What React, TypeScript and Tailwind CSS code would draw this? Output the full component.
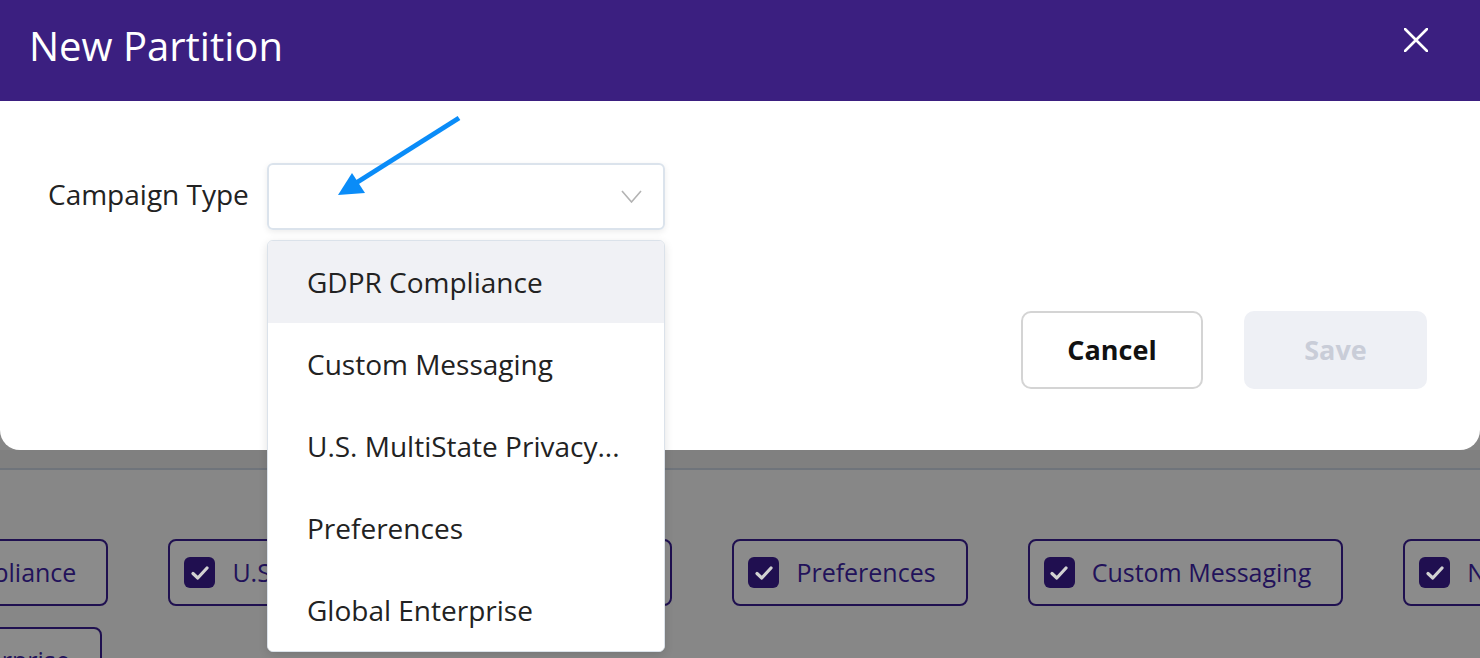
const font = { fontFamily: '"Open Sans", "Noto Sans", sans-serif' };

const options = ['GDPR Compliance', 'Custom Messaging', 'U.S. MultiState Privacy...', 'Preferences', 'Global Enterprise'];

const Chip = ({ label, className = '' }: { label: string; className?: string }) => (
  <div className={`shrink-0 h-[67px] flex items-center gap-[17px] pl-[14px] pr-[30px] rounded-[8px] border-2 border-[#1f1050] bg-[#8b8b8b] ${className}`}>
    <span className="w-[31px] h-[31px] rounded-[6px] bg-[#200f50] flex items-center justify-center">
      <svg width="18" height="14" viewBox="0 0 18 14" fill="none">
        <path d="M2 7.5 L6.8 12 L16 2" stroke="#d2d2d2" strokeWidth="3.2" strokeLinecap="round" strokeLinejoin="round" />
      </svg>
    </span>
    <span className="text-[25px] text-[#22125a] whitespace-nowrap leading-none">{label}</span>
  </div>
);

export default function App() {
  return (
    <div className="relative w-[1480px] h-[658px] overflow-hidden bg-[#878787]" style={font}>
      {/* modal */}
      <div className="bg-white rounded-b-[20px]">
        <div className="h-[101px] bg-[#3b1f80] flex items-start justify-between pl-[29px] pr-[52px]">
          <h1 className="text-[40px] text-white leading-none mt-[26px]">New Partition</h1>
          <svg width="24" height="24" viewBox="0 0 24 24" className="mt-[28px]">
            <path d="M1 1 L23 23 M23 1 L1 23" stroke="white" strokeWidth="2.6" strokeLinecap="round" />
          </svg>
        </div>
        <div className="h-[349px] px-12 pt-[62px] flex flex-col">
          <div className="flex items-center gap-4">
            <span className="w-[203px] text-[28px] text-[#222] leading-none -mt-[5px]">Campaign Type</span>
            <div className="w-[398px] h-[67px] rounded-[6px] border-2 border-[#dbe3ec] shadow-[0_2px_6px_rgba(0,0,0,0.08)] flex items-center justify-end pr-[21px]">
              <svg width="21" height="13" viewBox="0 0 21 13" fill="none">
                <path d="M1 1 L10.5 12 L20 1" stroke="#b3b3b3" strokeWidth="1.6" />
              </svg>
            </div>
          </div>
          <div className="flex justify-end gap-[41px] mt-[81px] pr-[5px]">
            <button className="w-[182px] h-[78px] rounded-[10px] border-2 border-[#d4d4d4] text-[27px] font-bold text-[#111]">Cancel</button>
            <button className="w-[183px] h-[78px] rounded-[10px] bg-[#eef0f5] text-[27px] font-bold text-[#c9cdd8]">Save</button>
          </div>
        </div>
      </div>

      {/* page underneath */}
      <div className="bg-[#808080] h-[18px]" />
      <div className="h-[2px] bg-[#6f747b]" />
      <div className="ml-[-198px] mt-[69px] flex flex-col gap-[21px]">
        <div className="flex gap-[60px]">
          <Chip label="GDPR Compliance" />
          <Chip label="U.S. MultiState Privacy Compliance" className="w-[504px]" />
          <Chip label="Preferences" />
          <Chip label="Custom Messaging" />
          <Chip label="New Campaign" />
        </div>
        <div className="flex gap-[60px] pl-[2px]">
          <Chip label="Global Enterprise" />
        </div>
      </div>

      {/* open dropdown */}
      <div className="absolute left-[267px] top-[240px] w-[398px] bg-white rounded-[6px] border border-[#dbe2ea] shadow-[0_3px_10px_rgba(0,0,0,0.12)] overflow-hidden">
        {options.map((o, i) => (
          <div
            key={o}
            className={`h-[82px] flex items-center pl-[39px] text-[28px] text-[#222] ${i === 0 ? 'bg-[#f0f1f5]' : 'bg-white'}`}
          >
            {o}
          </div>
        ))}
      </div>

      {/* annotation arrow */}
      <svg className="absolute left-0 top-0 pointer-events-none" width="1480" height="658">
        <line x1="459" y1="118" x2="356" y2="183" stroke="#0a8cf8" strokeWidth="5" />
        <polygon points="338,195 352,173 365,193" fill="#0a8cf8" />
      </svg>
    </div>
  );
}
